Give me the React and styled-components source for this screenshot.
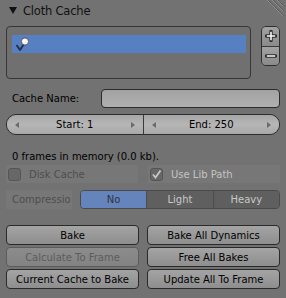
import React from 'react';
import styled, { createGlobalStyle } from 'styled-components';

const GlobalStyle = createGlobalStyle`
  html, body {
    margin: 0;
    padding: 0;
    background: #727272;
  }
  body {
    font-family: "DejaVu Sans", "Liberation Sans", sans-serif;
    font-size: 10px;
    color: #000;
  }
`;

const Panel = styled.div`
  width: 286px;
  height: 298px;
  box-sizing: border-box;
  padding: 0 6px;
  display: flex;
  flex-direction: column;
`;

const Header = styled.div`
  display: flex;
  align-items: center;
  height: 21px;
  margin-right: -4px;
`;

const Triangle = styled.div`
  width: 0;
  height: 0;
  margin-left: 3px;
  border-left: 4px solid transparent;
  border-right: 4px solid transparent;
  border-top: 7px solid #111;
`;

const Title = styled.div`
  margin-left: 6px;
  font-size: 11.5px;
  letter-spacing: -0.2px;
  color: #111;
`;

const Corner = styled.svg`
  margin-left: auto;
  align-self: flex-start;
`;

const ListRow = styled.div`
  display: flex;
  align-items: flex-start;
  gap: 10px;
  margin-top: 5px;
`;

const ListBox = styled.div`
  flex: 1;
  height: 53px;
  box-sizing: border-box;
  border: 1px solid #363636;
  border-radius: 4px;
  padding: 8px 4px 0 5px;
  background: #707070;
`;

const ListItem = styled.div`
  height: 18px;
  background: #5680c2;
  display: flex;
  align-items: center;
  padding-left: 3px;
`;

const AddRemove = styled.div`
  width: 19px;
  height: 40px;
  box-sizing: border-box;
  border: 1px solid #2e2e2e;
  border-radius: 5px;
  display: flex;
  flex-direction: column;
  overflow: hidden;
`;

const SmallButton = styled.div`
  flex: 1;
  display: flex;
  align-items: center;
  justify-content: center;
  background: linear-gradient(#a2a2a2, #8a8a8a);
  border-top: ${(p) => (p.$lower ? '1px solid #3a3a3a' : 'none')};
`;

const FieldRow = styled.div`
  display: flex;
  align-items: center;
  height: 19px;
  margin-top: 10px;
`;

const FieldLabel = styled.div`
  width: 95px;
  box-sizing: border-box;
  padding-left: 6px;
`;

const TextField = styled.div`
  flex: 1;
  height: 19px;
  box-sizing: border-box;
  border: 1px solid #2c2c2c;
  border-radius: 4px;
  background: linear-gradient(#a2a2a2, #b0b0b0);
`;

const NumberRow = styled.div`
  display: flex;
  height: 21px;
  margin-top: 6px;
  box-sizing: border-box;
  border: 1px solid #2c2c2c;
  border-radius: 10px;
  overflow: hidden;
`;

const NumberHalf = styled.div`
  flex: 1;
  display: flex;
  align-items: center;
  justify-content: space-between;
  padding: 0 8px;
  background: linear-gradient(#a6a6a6, #b6b6b6 50%, #a8a8a8);
  border-left: ${(p) => (p.$right ? '1px solid #3a3a3a' : 'none')};
`;

const Arrow = styled.div`
  width: 0;
  height: 0;
  border-top: 3px solid transparent;
  border-bottom: 3px solid transparent;
  ${(p) => (p.$dir === 'left' ? 'border-right: 4px solid #6a6a6a;' : 'border-left: 4px solid #6a6a6a;')}
`;

const Info = styled.div`
  height: 18px;
  margin-top: 12px;
  padding-left: 6px;
  display: flex;
  align-items: center;
`;

const OptionRow = styled.div`
  display: grid;
  grid-template-columns: 1fr 1fr;
  gap: 10px;
  height: 18px;
`;

const OptionCell = styled.div`
  display: flex;
  align-items: center;
  gap: 8px;
  padding-left: 2px;
  background: #777777;
  color: ${(p) => (p.$checked ? '#c4c4c4' : '#4e4e4e')};
`;

const CheckBox = styled.div`
  width: 13px;
  height: 13px;
  box-sizing: border-box;
  border: 1px solid #555;
  border-radius: 3px;
  background: #676767;
  display: flex;
  align-items: center;
  justify-content: center;
`;

const CompressionRow = styled.div`
  display: flex;
  height: 19px;
  margin-top: 7px;
  gap: 8px;
`;

const DimLabel = styled.div`
  width: 66px;
  box-sizing: border-box;
  padding-left: 6px;
  background: #777777;
  color: #4e4e4e;
  display: flex;
  align-items: center;
  overflow: hidden;
  white-space: nowrap;
`;

const Segmented = styled.div`
  flex: 1;
  display: flex;
  box-sizing: border-box;
  border: 1px solid #4a4a4a;
  border-radius: 4px;
  overflow: hidden;
`;

const Segment = styled.div`
  flex: 1;
  display: flex;
  align-items: center;
  justify-content: center;
  background: ${(p) => (p.$active ? '#6584bb' : '#5f5f5f')};
  color: ${(p) => (p.$active ? '#2e3440' : '#c8c8c8')};
  & + & {
    border-left: 1px solid #4c4c4c;
  }
`;

const ButtonGrid = styled.div`
  display: grid;
  grid-template-columns: 1fr 1fr;
  grid-auto-rows: 20px;
  gap: 2px 8px;
  margin-top: 16px;
`;

const Button = styled.div`
  box-sizing: border-box;
  border: 1px solid ${(p) => (p.$disabled ? '#5c5c5c' : '#2a2a2a')};
  border-radius: 4px;
  background: ${(p) =>
    p.$disabled ? 'linear-gradient(#8c8c8c, #838383)' : 'linear-gradient(#a4a4a4, #8e8e8e)'};
  color: ${(p) => (p.$disabled ? '#5c5c5c' : '#000')};
  display: flex;
  align-items: center;
  justify-content: center;
  white-space: nowrap;
`;

function ItemIcon() {
  return (
    <svg width="14" height="15" viewBox="0 0 14 15">
      <path d="M1.5 8 L5 13 L9.5 6" fill="none" stroke="#24324f" strokeWidth="2" strokeLinejoin="round" />
      <circle cx="10" cy="4.5" r="3.6" fill="#f2f2f2" stroke="#444" strokeWidth="0.8" />
      <circle cx="9" cy="3.6" r="1.4" fill="#fff" />
    </svg>
  );
}

function PlusIcon() {
  return (
    <svg width="12" height="12" viewBox="0 0 12 12">
      <path d="M6 1.5 V10.5 M1.5 6 H10.5" stroke="#2a2a2a" strokeWidth="3.4" strokeLinecap="round" />
      <path d="M6 1.8 V10.2 M1.8 6 H10.2" stroke="#fafafa" strokeWidth="1.6" />
    </svg>
  );
}

function MinusIcon() {
  return (
    <svg width="12" height="6" viewBox="0 0 12 6">
      <path d="M1.5 3 H10.5" stroke="#2a2a2a" strokeWidth="3.4" strokeLinecap="round" />
      <path d="M1.8 3 H10.2" stroke="#fafafa" strokeWidth="1.6" />
    </svg>
  );
}

export default function App() {
  return (
    <>
      <GlobalStyle />
      <Panel>
        <Header>
          <Triangle />
          <Title>Cloth Cache</Title>
          <Corner width="20" height="17" viewBox="0 0 20 17">
            <path d="M3 0 L19 16 M8 0 L19 11 M13 0 L19 6" stroke="#8e8e8e" strokeWidth="1" />
            <path d="M4 0 L20 16 M9 0 L20 11 M14 0 L20 6" stroke="#5a5a5a" strokeWidth="1" />
          </Corner>
        </Header>

        <ListRow>
          <ListBox>
            <ListItem>
              <ItemIcon />
            </ListItem>
          </ListBox>
          <AddRemove>
            <SmallButton>
              <PlusIcon />
            </SmallButton>
            <SmallButton $lower>
              <MinusIcon />
            </SmallButton>
          </AddRemove>
        </ListRow>

        <FieldRow>
          <FieldLabel>Cache Name:</FieldLabel>
          <TextField />
        </FieldRow>

        <NumberRow>
          <NumberHalf>
            <Arrow $dir="left" />
            <span>Start: 1</span>
            <Arrow $dir="right" />
          </NumberHalf>
          <NumberHalf $right>
            <Arrow $dir="left" />
            <span>End: 250</span>
            <Arrow $dir="right" />
          </NumberHalf>
        </NumberRow>

        <Info>0 frames in memory (0.0 kb).</Info>

        <OptionRow>
          <OptionCell>
            <CheckBox />
            Disk Cache
          </OptionCell>
          <OptionCell $checked>
            <CheckBox>
              <svg width="11" height="11" viewBox="0 0 11 11">
                <path d="M2 5.5 L4.5 8.5 L9.5 1.5" fill="none" stroke="#c8c8c8" strokeWidth="1.8" />
              </svg>
            </CheckBox>
            Use Lib Path
          </OptionCell>
        </OptionRow>

        <CompressionRow>
          <DimLabel>Compressio</DimLabel>
          <Segmented>
            <Segment $active>No</Segment>
            <Segment>Light</Segment>
            <Segment>Heavy</Segment>
          </Segmented>
        </CompressionRow>

        <ButtonGrid>
          <Button>Bake</Button>
          <Button>Bake All Dynamics</Button>
          <Button $disabled>Calculate To Frame</Button>
          <Button>Free All Bakes</Button>
          <Button>Current Cache to Bake</Button>
          <Button>Update All To Frame</Button>
        </ButtonGrid>
      </Panel>
    </>
  );
}
